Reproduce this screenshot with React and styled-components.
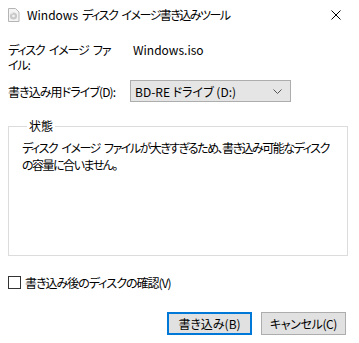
import React from "react";
import styled, { createGlobalStyle } from "styled-components";

const Global = createGlobalStyle`
  html, body { margin: 0; padding: 0; background: #fff; }
  body {
    font-family: "Noto Sans CJK JP", "Noto Sans", sans-serif;
    font-size: 12px;
    color: #000;
    font-feature-settings: "palt";
  }
`;

const Window = styled.div`
  width: 359px;
  height: 343px;
  background: #fff;
  display: flex;
  flex-direction: column;
  box-sizing: border-box;
`;

const TitleBar = styled.div`
  height: 30px;
  display: flex;
  align-items: center;
  padding-left: 7px;
  gap: 7px;
  flex-shrink: 0;
`;

const TitleText = styled.div`
  flex: 1;
  display: flex;
  gap: 4px;
  line-height: 16px;
`;

const TitlePart = styled.span`
  letter-spacing: ${(p) => p.$ls || 0}px;
  word-spacing: 3px;
`;

const CloseButton = styled.div`
  width: 46px;
  height: 30px;
  display: flex;
  align-items: center;
  justify-content: center;
`;

const Body = styled.div`
  flex: 1;
  display: flex;
  flex-direction: column;
  padding: 12px 12px 8px 8px;
`;

const FieldRow = styled.div`
  display: grid;
  grid-template-columns: 122px 1fr;
  align-items: ${(p) => p.$align || "center"};
  margin-bottom: ${(p) => p.$mb || 0}px;
`;

const Label = styled.div`
  line-height: 15px;
  width: ${(p) => (p.$nowrap ? "auto" : "106px")};
  white-space: ${(p) => (p.$nowrap ? "nowrap" : "normal")};
  word-break: break-all;
  letter-spacing: ${(p) => p.$ls}px;
  word-spacing: 3px;
`;

const Value = styled.div`
  padding-left: 3px;
  line-height: 15px;
`;

const Select = styled.div`
  width: 161px;
  height: 22px;
  box-sizing: border-box;
  background: #e5e5e5;
  border: 1px solid #adadad;
  display: flex;
  align-items: center;
  justify-content: space-between;
  padding: 0 8px 0 4px;
`;

const Group = styled.fieldset`
  margin: 0;
  padding: 6px 12px 0 12px;
  border: 1px solid #dcdcdc;
  height: 137px;
  box-sizing: border-box;
  width: 340px;
  margin-bottom: 19px;
`;

const Legend = styled.legend`
  padding: 0 2px;
  margin-left: 6px;
  line-height: 14px;
`;

const GroupText = styled.div`
  line-height: 17px;
  margin-left: 1px;
  width: 310px;
  letter-spacing: -1.5px;
  word-spacing: 3px;
`;

const CheckRow = styled.label`
  display: flex;
  align-items: center;
  gap: 4px;
  line-height: 15px;
`;

const CheckLabel = styled.span`
  letter-spacing: -1px;
`;

const CheckBox = styled.span`
  width: 13px;
  height: 13px;
  box-sizing: border-box;
  border: 1px solid #333;
  background: #fff;
  display: inline-block;
`;

const ButtonRow = styled.div`
  margin-top: auto;
  display: flex;
  justify-content: flex-end;
  gap: 9px;
  padding-right: 1px;
`;

const Button = styled.div`
  width: 85px;
  height: 23px;
  box-sizing: border-box;
  background: #e1e1e1;
  border: ${(p) => (p.$primary ? "2px solid #0078d7" : "1px solid #adadad")};
  display: flex;
  align-items: center;
  justify-content: center;
  letter-spacing: ${(p) => p.$ls || 0}px;
`;

const DiscIcon = () => (
  <svg width="13" height="14" viewBox="0 0 13 14">
    <path d="M1.5 0.5h7l3.5 3.5v9.5h-10.5z" fill="#f4f4f4" stroke="#b5b5b5" />
    <circle cx="6.5" cy="8" r="3.6" fill="#c9c9c9" />
    <circle cx="6.5" cy="8" r="1.3" fill="#f4f4f4" />
    <path d="M4 6.5 a3 3 0 0 1 2 -1.8" stroke="#eee" fill="none" />
  </svg>
);

const CloseIcon = () => (
  <svg width="10" height="10" viewBox="0 0 10 10">
    <path d="M0.5 0.5L9.5 9.5M9.5 0.5L0.5 9.5" stroke="#000" strokeWidth="1" />
  </svg>
);

const Chevron = () => (
  <svg width="9" height="5" viewBox="0 0 9 5">
    <path d="M0.5 0.5L4.5 4.5L8.5 0.5" stroke="#555" fill="none" />
  </svg>
);

export default function App() {
  return (
    <>
      <Global />
      <Window>
        <TitleBar>
          <DiscIcon />
          <TitleText>
            <TitlePart>Windows</TitlePart>
            <TitlePart $ls={-1.5}>ディスク イメージ書き込みツール</TitlePart>
          </TitleText>
          <CloseButton>
            <CloseIcon />
          </CloseButton>
        </TitleBar>
        <Body>
          <FieldRow $align="start" $mb={8}>
            <Label $ls={-1.2}>ディスク イメージ ファイル:</Label>
            <Value>Windows.iso</Value>
          </FieldRow>
          <FieldRow $mb={17}>
            <Label $nowrap $ls={-0.9}>
              書き込み用ドライブ(D):
            </Label>
            <Select>
              <span>BD-RE ドライブ (D:)</span>
              <Chevron />
            </Select>
          </FieldRow>
          <Group>
            <Legend>状態</Legend>
            <GroupText>
              ディスク イメージ ファイルが大きすぎるため、書き込み可能なディスクの容量に合いません。
            </GroupText>
          </Group>
          <CheckRow>
            <CheckBox />
            <CheckLabel>書き込み後のディスクの確認(V)</CheckLabel>
          </CheckRow>
          <ButtonRow>
            <Button $primary>書き込み(B)</Button>
            <Button $ls={-0.4}>キャンセル(C)</Button>
          </ButtonRow>
        </Body>
      </Window>
    </>
  );
}
